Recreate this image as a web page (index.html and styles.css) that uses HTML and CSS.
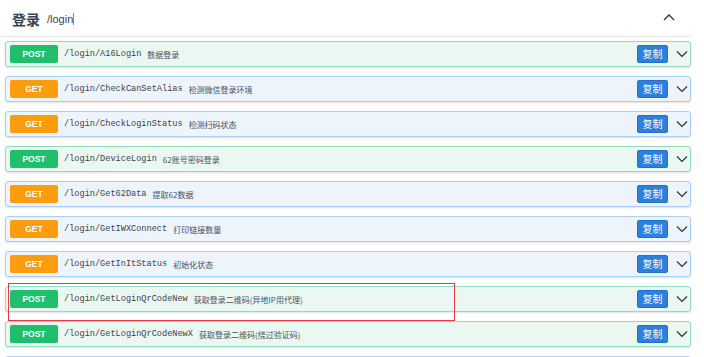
FILE: index.html
```html
<!DOCTYPE html>
<html lang="zh-CN">
<head>
    <meta charset="UTF-8">
    <title>登录 /login</title>
    <link rel="stylesheet" href="styles.css">
</head>
<body>
    <div class="page">
        <div class="tag-head">
            <span class="tag-title">登录</span>
            <span class="tag-path">/login</span><span class="caret"></span>
            <svg class="tag-toggle" width="12" height="8" viewBox="0 0 12 8"><path d="M1 7 L6 2 L11 7" fill="none" stroke="#333" stroke-width="1.3"/></svg>
        </div>

        <!-- 接口列表 -->
        <div class="ops">
            <div class="op post">
                <span class="method">POST</span>
                <span class="path">/login/A16Login</span>
                <span class="desc">数据登录</span>
                <button class="copy">复制</button>
                <svg class="arrow" width="12" height="8" viewBox="0 0 12 8"><path d="M1 1.5 L6 6.5 L11 1.5" fill="none" stroke="#333" stroke-width="1.2"/></svg>
            </div>
            <div class="op get">
                <span class="method">GET</span>
                <span class="path">/login/CheckCanSetAlias</span>
                <span class="desc">检测微信登录环境</span>
                <button class="copy">复制</button>
                <svg class="arrow" width="12" height="8" viewBox="0 0 12 8"><path d="M1 1.5 L6 6.5 L11 1.5" fill="none" stroke="#333" stroke-width="1.2"/></svg>
            </div>
            <div class="op get">
                <span class="method">GET</span>
                <span class="path">/login/CheckLoginStatus</span>
                <span class="desc">检测扫码状态</span>
                <button class="copy">复制</button>
                <svg class="arrow" width="12" height="8" viewBox="0 0 12 8"><path d="M1 1.5 L6 6.5 L11 1.5" fill="none" stroke="#333" stroke-width="1.2"/></svg>
            </div>
            <div class="op post">
                <span class="method">POST</span>
                <span class="path">/login/DeviceLogin</span>
                <span class="desc">62账号密码登录</span>
                <button class="copy">复制</button>
                <svg class="arrow" width="12" height="8" viewBox="0 0 12 8"><path d="M1 1.5 L6 6.5 L11 1.5" fill="none" stroke="#333" stroke-width="1.2"/></svg>
            </div>
            <div class="op get">
                <span class="method">GET</span>
                <span class="path">/login/Get62Data</span>
                <span class="desc">提取62数据</span>
                <button class="copy">复制</button>
                <svg class="arrow" width="12" height="8" viewBox="0 0 12 8"><path d="M1 1.5 L6 6.5 L11 1.5" fill="none" stroke="#333" stroke-width="1.2"/></svg>
            </div>
            <div class="op get">
                <span class="method">GET</span>
                <span class="path">/login/GetIWXConnect</span>
                <span class="desc">打印链接数量</span>
                <button class="copy">复制</button>
                <svg class="arrow" width="12" height="8" viewBox="0 0 12 8"><path d="M1 1.5 L6 6.5 L11 1.5" fill="none" stroke="#333" stroke-width="1.2"/></svg>
            </div>
            <div class="op get">
                <span class="method">GET</span>
                <span class="path">/login/GetInItStatus</span>
                <span class="desc">初始化状态</span>
                <button class="copy">复制</button>
                <svg class="arrow" width="12" height="8" viewBox="0 0 12 8"><path d="M1 1.5 L6 6.5 L11 1.5" fill="none" stroke="#333" stroke-width="1.2"/></svg>
            </div>
            <div class="op post">
                <span class="method">POST</span>
                <span class="path">/login/GetLoginQrCodeNew</span>
                <span class="desc">获取登录二维码(异地IP用代理)</span>
                <button class="copy">复制</button>
                <svg class="arrow" width="12" height="8" viewBox="0 0 12 8"><path d="M1 1.5 L6 6.5 L11 1.5" fill="none" stroke="#333" stroke-width="1.2"/></svg>
            </div>
            <div class="op post">
                <span class="method">POST</span>
                <span class="path">/login/GetLoginQrCodeNewX</span>
                <span class="desc">获取登录二维码(绕过验证码)</span>
                <button class="copy">复制</button>
                <svg class="arrow" width="12" height="8" viewBox="0 0 12 8"><path d="M1 1.5 L6 6.5 L11 1.5" fill="none" stroke="#333" stroke-width="1.2"/></svg>
            </div>
            <!-- 下一行只露出边框 -->
            <div class="op get"></div>
        </div>

        <!-- 标注框 -->
        <div class="mark"></div>
    </div>
</body>
</html>
```

FILE: styles.css
```css
body {
    margin: 0;
    font-family: "Liberation Sans", Arial, "Noto Sans CJK SC", sans-serif;
    color: #3b4151;
    background: #fff;
    overflow: hidden;
}

.page {
    position: relative;
    width: 691px;
}

.tag-head {
    display: flex;
    align-items: center;
    height: 37px;
    padding: 0 16px 0 12px;
    border-bottom: 1px solid #e3e3e3;
    box-sizing: border-box;
}

.tag-title {
    font-family: "Noto Sans CJK SC", sans-serif;
    font-size: 14px;
    font-weight: bold;
    color: #3b4151;
    margin-top: 1px;
}

.tag-path {
    font-size: 11px;
    color: #3b4151;
    margin-left: 7px;
    margin-top: 2px;
}

.caret {
    display: inline-block;
    width: 0;
    height: 12px;
    border-left: 1px solid #888;
    margin-top: 2px;
}

.tag-toggle {
    margin-left: auto;
    margin-top: -3px;
}

.ops {
    padding: 4px 0 0 5px;
}

.op {
    display: flex;
    align-items: center;
    height: 26px;
    box-sizing: border-box;
    margin-bottom: 9px;
    padding: 0 2px 0 4px;
    border: 1px solid;
    border-radius: 3px;
    box-shadow: 0 1px 2px rgba(0, 0, 0, 0.12);
}

.op.post {
    background: #eaf8f1;
    border-color: #96dbb8;
}

.op.get {
    background: #edf4fc;
    border-color: #a9cff7;
}

.method {
    width: 48px;
    height: 18px;
    line-height: 18px;
    border-radius: 2px;
    text-align: center;
    color: #fff;
    font-size: 8.5px;
    font-weight: bold;
}

.post .method {
    background: #1fbf6c;
}

.get .method {
    background: #fb9d0c;
}

.path {
    font-family: "Liberation Mono", "Courier New", monospace;
    font-size: 8.6px;
    color: #3b4151;
    margin-left: 6px;
    transform: scaleY(1.15);
}

.desc {
    font-family: "Noto Sans CJK SC", sans-serif;
    font-size: 8px;
    color: #4a5060;
    margin-left: 6px;
}

.copy {
    margin-left: auto;
    width: 31px;
    height: 18px;
    padding: 0;
    border: 1px solid #2470c8;
    border-radius: 2px;
    background: #2d80de;
    color: #fff;
    font-family: "Noto Sans CJK SC", sans-serif;
    font-size: 10px;
    line-height: 16px;
}

.arrow {
    margin-left: 8px;
}

.mark {
    position: absolute;
    left: 8px;
    top: 283px;
    width: 447px;
    height: 38px;
    border: 1px solid #ea3a3f;
    box-sizing: border-box;
}
```
